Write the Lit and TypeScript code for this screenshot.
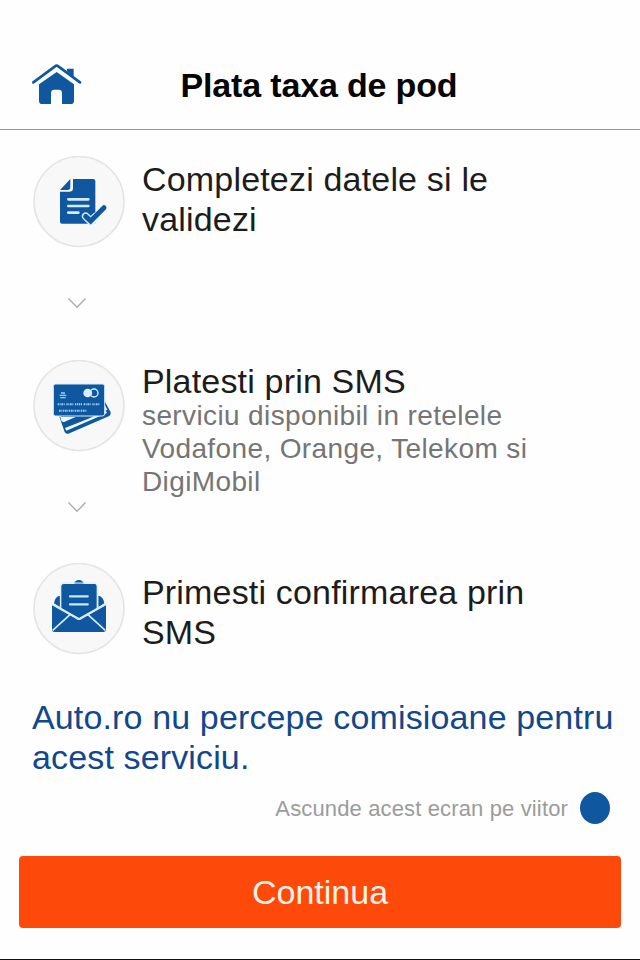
import { LitElement, html, css, svg } from "lit";
import { customElement } from "lit/decorators.js";

const docIcon = svg`
  <path fill="#0f58a0" d="M144 87H205Q211 87 211 93V221H111Q105 221 105 215V125H134Q144 125 144 115Z"/>
  <path fill="#0f58a0" d="M136 87V111Q136 120 128 120H105Z"/>
  <path fill="none" stroke="#d5ecff" stroke-width="8" stroke-linecap="round" d="M130 148H190M130 168H190M130 188H160"/>
  <path fill="#f8f8f8" d="M211 187V224H200Z"/>
  <path fill="none" stroke="#d5ecff" stroke-width="23" stroke-linejoin="round" stroke-linecap="round" d="M182 199L197 214L211 200"/>
  <path fill="none" stroke="#f8f8f8" stroke-width="4" d="M205 222L215 212"/>
  <path fill="none" stroke="#0f58a0" stroke-width="15" stroke-linejoin="miter" stroke-linecap="round" d="M182 199L197 213L237 173"/>`;

const cardIcon = svg`
  <path fill="#0f58a0" d="M103 197L130 190L240 152L257 184Q259 191 253 195L130 248Q122 250 119 243Z"/>
  <path fill="#f4faff" d="M106 198H152L117 213Q110 214 108 207Z"/>
  <path fill="#f4faff" d="M120 231L190 203L242 180L246 186L124 239Z"/>
  <path fill="#f4faff" d="M239 161L247 176L240 180Z"/>
  <rect x="85" y="99" width="154" height="96" rx="7" fill="#0f58a0" stroke="#d5ecff" stroke-width="3"/>
  <circle cx="188" cy="126" r="13" fill="#d9efff"/>
  <circle cx="207" cy="126" r="12" fill="#0f58a0" stroke="#d9efff" stroke-width="4"/>
  <path fill="#d9efff" d="M198 117Q205 126 198 135Q191 126 198 117Z"/>
  <path fill="none" stroke="#9fcdf0" stroke-width="4" d="M108 126H120M104 133H124M106 140H122"/>
  <path fill="none" stroke="#9fcbed" stroke-width="6" stroke-dasharray="4 2 3 2 5 2 3 5" d="M98 160H224"/>
  <path fill="none" stroke="#9fcbed" stroke-width="6" stroke-dasharray="5 2 3 2 4 2" d="M102 179H186"/>`;

const mailIcon = svg`
  <path fill="#0f58a0" d="M148 281Q150 270 162 270Q173 270 176 281Z"/>
  <path fill="#0f58a0" d="M105 317V351L87 340Q89 320 105 317ZM220 317V351L238 340Q236 320 220 317Z"/>
  <path fill="#0f58a0" d="M109 289Q109 282 116 282H209Q215 282 215 289V354L162 384L109 354Z"/>
  <path fill="none" stroke="#c6e8ff" stroke-width="7" stroke-linecap="round" d="M135 319H188M135 343H188"/>
  <path fill="#0f58a0" d="M81 345L162 390L243 345V418Q243 426 235 426H89Q81 426 81 418Z"/>
  <path fill="none" stroke="#d5ecff" stroke-width="5" d="M81 343L154 384Q162 391 170 384L243 343M136 373L83 421M188 373L241 421"/>
  <path fill="none" stroke="#d5ecff" stroke-width="3" d="M106 355V290Q106 280 116 279H209Q218 280 218 290V355"/>`;

const steps = [
  { icon: docIcon, box: "24 18 276 276", lines: ["Completezi datele si le", "validezi"], sub: [] as string[], next: true },
  { icon: cardIcon, box: "24 27 276 276", lines: ["Platesti prin SMS"], sub: ["serviciu disponibil in retelele", "Vodafone, Orange, Telekom si", "DigiMobil"], next: true },
  { icon: mailIcon, box: "24 219 276 276", lines: ["Primesti confirmarea prin", "SMS"], sub: [] as string[], next: false },
];

@customElement("app-root")
export class AppRoot extends LitElement {
  static styles = css`
    :host {
      display: flex;
      flex-direction: column;
      box-sizing: border-box;
      width: 640px;
      height: 960px;
      overflow: hidden;
      background: #fefefe;
      border-bottom: 1px solid #111;
      font-family: "Liberation Sans", Arial, sans-serif;
      color: #1c1c1c;
    }
    svg { display: block; }
    .header {
      display: grid;
      grid-template-columns: 60px 1fr 60px;
      align-items: center;
      box-sizing: border-box;
      height: 130px;
      padding: 41px 28px 0 26px;
      border-bottom: 1px solid #999;
    }
    .title {
      margin: 0;
      text-align: center;
      font-size: 34px;
      line-height: 40px;
      font-weight: 700;
      letter-spacing: -0.16px;
      color: #050505;
      white-space: nowrap;
    }
    .steps { display: flex; flex-direction: column; padding: 26px 0 0 33px; }
    .step { display: grid; grid-template-columns: 92px 1fr; column-gap: 17px; height: 203.5px; }
    .step:last-child { height: 135px; }
    .rail { display: flex; flex-direction: column; }
    .chevron { margin: 49px 0 0 34px; }
    .copy { padding-top: 3px; }
    .step:nth-child(2) .copy { padding-top: 1px; }
    .step:last-child .copy { padding-top: 9px; }
    .line { font-size: 34px; line-height: 40px; letter-spacing: 0.18px; white-space: nowrap; }
    .sub { margin-top: -2px; color: #757575; }
    .subline { font-size: 28px; line-height: 33px; letter-spacing: 0.38px; white-space: nowrap; }
    .note { padding-left: 32px; color: #12488b; }
    .note .line { letter-spacing: 0.14px; line-height: 39.5px; }
    .hide {
      display: flex;
      align-items: center;
      justify-content: flex-end;
      gap: 12px;
      height: 32px;
      margin-top: 15px;
      padding-right: 30px;
      font-size: 22px;
      letter-spacing: 0.14px;
      color: #9b9b9b;
      white-space: nowrap;
    }
    .hide-label { padding-top: 1px; }
    .dot { width: 30px; height: 32px; border-radius: 50%; background: #0f58a0; }
    .button {
      height: 72px;
      margin: 32px 19px 0;
      border: 0;
      border-radius: 4px;
      padding: 0;
      background: #fd4a0a;
      color: #fff3e6;
      font: 34px/72px "Liberation Sans", Arial, sans-serif;
    }
  `;

  render() {
    return html`
      <header class="header">
        <svg width="60" height="50" viewBox="18 27 180 150">
          <path fill="#0f58a0" d="M57 100L110 63L162 100V149Q162 159 152 159H126V126Q126 116 116 116H103Q93 116 93 126V159H67Q57 159 57 149Z"/>
          <path fill="#0f58a0" d="M141 61V53H161V78Z"/>
          <path fill="none" stroke="#0f58a0" stroke-width="8" stroke-linecap="round" stroke-linejoin="round" d="M40 94L105 46Q110 42 115 46L180 94"/>
        </svg>
        <h1 class="title">Plata taxa de pod</h1>
      </header>
      <main class="steps">
        ${steps.map((s) => html`
          <section class="step">
            <div class="rail">
              <svg width="92" height="92" viewBox="0 0 92 92">
                <circle cx="46" cy="45.5" r="45" fill="#f8f8f8" stroke="#e4e4e4" stroke-width="1.5"/>
                <svg width="92" height="92" viewBox=${s.box}>${s.icon}</svg>
              </svg>
              ${s.next ? html`<svg class="chevron" width="20" height="12" viewBox="0 0 20 12"><path fill="none" stroke="#aaa" stroke-width="1.3" d="M1.5 1.5L10 10.3L18.5 1.5"/></svg>` : null}
            </div>
            <div class="copy">
              ${s.lines.map((l) => html`<div class="line">${l}</div>`)}
              <div class="sub">${s.sub.map((l) => html`<div class="subline">${l}</div>`)}</div>
            </div>
          </section>`)}
      </main>
      <div class="note">
        <div class="line">Auto.ro nu percepe comisioane pentru</div>
        <div class="line">acest serviciu.</div>
      </div>
      <div class="hide"><span class="hide-label">Ascunde acest ecran pe viitor</span><span class="dot"></span></div>
      <button class="button">Continua</button>
    `;
  }
}
